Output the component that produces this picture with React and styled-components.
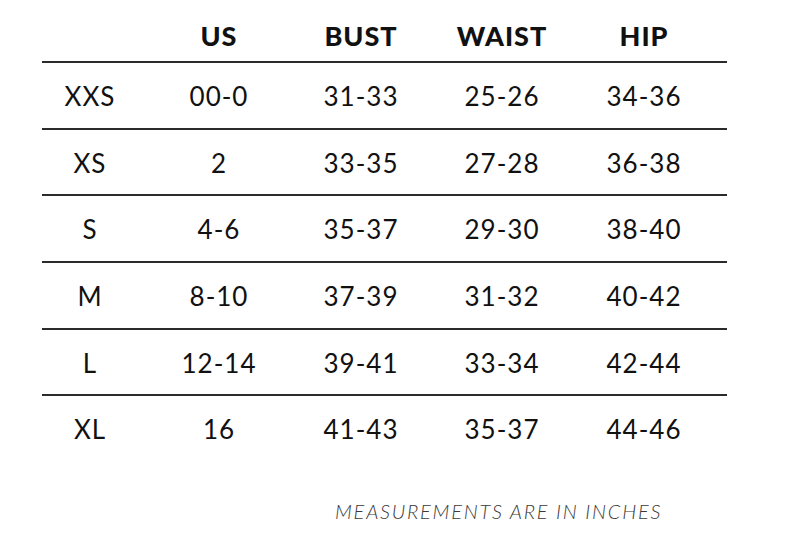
import React from "react";
import styled, { createGlobalStyle } from "styled-components";

const Global = createGlobalStyle`
  html, body { margin: 0; padding: 0; background: #fff; }
  body { font-family: Lato, "Noto Sans", sans-serif; color: #111; }
`;

const Page = styled.div`
  width: 788px;
  height: 552px;
  background: #fff;
  overflow: hidden;
`;

const Table = styled.div`
  margin-left: 42px;
  width: 685px;
`;

const Row = styled.div`
  display: grid;
  grid-template-columns: 96px 162px 122px 160px 124px;
  align-items: center;
  height: ${(p) => (p.$head ? "61px" : "64.7px")};
  border-bottom: ${(p) => (p.$last ? "none" : "2px solid #2b2b2b")};
`;

const Cell = styled.div`
  text-align: center;
  font-size: ${(p) => (p.$head ? "27px" : "26px")};
  font-weight: ${(p) => (p.$head ? 900 : 400)};
  letter-spacing: 1px;
  color: #111;
  line-height: 1;
  padding-top: ${(p) => (p.$head ? "10px" : "1px")};
`;

const Note = styled.div`
  margin: 38px 0 0 335px;
  font-family: Lato, "Noto Sans", sans-serif;
  font-style: italic;
  font-weight: 300;
  font-size: 20px;
  letter-spacing: 1.75px;
  color: #3a3a3a;
  white-space: nowrap;
`;

const headers = ["", "US", "BUST", "WAIST", "HIP"];
const rows = [
  ["XXS", "00-0", "31-33", "25-26", "34-36"],
  ["XS", "2", "33-35", "27-28", "36-38"],
  ["S", "4-6", "35-37", "29-30", "38-40"],
  ["M", "8-10", "37-39", "31-32", "40-42"],
  ["L", "12-14", "39-41", "33-34", "42-44"],
  ["XL", "16", "41-43", "35-37", "44-46"],
];

export default function App() {
  return (
    <Page>
      <Global />
      <Table>
        <Row $head>
          {headers.map((h, i) => (
            <Cell $head key={i}>{h}</Cell>
          ))}
        </Row>
        {rows.map((r, i) => (
          <Row key={i} $last={i === rows.length - 1}>
            {r.map((c, j) => (
              <Cell key={j}>{c}</Cell>
            ))}
          </Row>
        ))}
      </Table>
      <Note>MEASUREMENTS ARE IN INCHES</Note>
    </Page>
  );
}
